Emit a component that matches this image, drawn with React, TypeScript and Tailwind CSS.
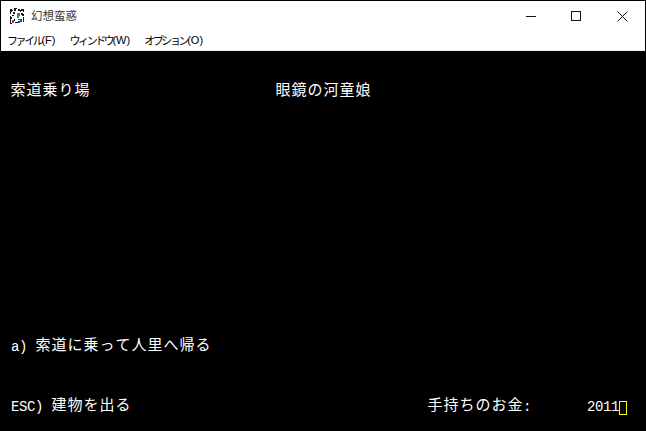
const mono = "font-['Liberation_Mono','Noto_Sans_CJK_JP',monospace]";

function Cjk({ children }: { children: string }) {
  return (
    <span className="flex">
      {Array.from(children).map((c, i) => (
        <span key={i} className="w-4 text-center text-[15px] leading-5">{c}</span>
      ))}
    </span>
  );
}

function Lat({ children }: { children: string }) {
  return <span className="whitespace-pre text-[14px] leading-5 tracking-[-0.4px]">{children}</span>;
}

function Menu({ kana, mark }: { kana: string; mark: string }) {
  return (
    <span className="flex items-center">
      <span className="font-['Noto_Sans_CJK_JP',sans-serif] tracking-[-2.4px]">{kana}</span>
      <span className="font-['Liberation_Sans',sans-serif]">{mark}</span>
    </span>
  );
}

export default function App() {
  return (
    <div className="flex h-[431px] w-[646px] flex-col overflow-hidden border border-b-0 border-black bg-black text-white">
      <div className="flex h-[30px] items-center bg-white pl-[8px] text-black">
        <svg width="16" height="16" viewBox="0 0 16 16" className="shrink-0" shapeRendering="crispEdges">
          <rect x="0" y="0" width="16" height="16" fill="#fff" />
          <path d="M1 1h2v1h1v1H3v1H2v2H1zM5 0h3v1H7v2H5zM9 1h2v1h1V1h3v3h-1V3h-2v1h-1V3H9zM1 8h1v1h1v2H2v4h1v1H1zM4 4h2v2H4zM3 7h2v1H3zM12 5h2v1h1v2h-2V7h-1zM14 9h1v5h-1zM6 14h3v1H6zM5 11h1v2H5z" fill="#1a1a1a" />
          <path d="M8 5h3v3h-1v2H8z" fill="#1f9d3a" />
          <path d="M9 11h4v3h-2v1H9v-2h2v-1H9z" fill="#2036c8" />
          <path d="M3 12h2v3H3z" fill="#c03030" />
        </svg>
        <span className="ml-[6px] font-['Noto_Sans_CJK_JP',sans-serif] text-[11.5px] text-[#333]">幻想蛮惑</span>
        <div className="ml-auto flex h-full items-center">
          <div className="flex h-full w-[45px] items-center justify-center">
            <svg width="11" height="11" viewBox="0 0 11 11"><path d="M0 5.5h10" stroke="#111" strokeWidth="1" /></svg>
          </div>
          <div className="flex h-full w-[45px] items-center justify-center">
            <svg width="11" height="11" viewBox="0 0 11 11"><rect x="0.5" y="0.5" width="9" height="9" fill="none" stroke="#111" /></svg>
          </div>
          <div className="flex h-full w-[46px] items-center justify-center">
            <svg width="11" height="11" viewBox="0 0 11 11"><path d="M0.5 0.5l10 10M10.5 0.5l-10 10" stroke="#111" /></svg>
          </div>
        </div>
      </div>
      <div className="flex h-[20px] items-center gap-[14px] border-b border-[#f0f0f0] bg-white pl-[6px] pb-[1px] text-[11px] text-black">
        <Menu kana="ファイル" mark="(F)" />
        <Menu kana="ウィンドウ" mark="(W)" />
        <Menu kana="オプション" mark="(O)" />
      </div>
      <div className={`flex flex-1 flex-col pl-[9px] pr-[18px] pt-[31px] ${mono}`}>
        <div className="flex h-5">
          <div className="w-[265px]"><Cjk>索道乗り場</Cjk></div>
          <Cjk>眼鏡の河童娘</Cjk>
        </div>
        <div className="mt-[235px] flex h-5 items-center pl-[1px]">
          <Lat>a) </Lat><Cjk>索道に乗って人里へ帰る</Cjk>
        </div>
        <div className="mt-[40px] flex h-5 items-center pl-[1px]">
          <Lat>ESC) </Lat><Cjk>建物を出る</Cjk>
          <div className="ml-auto flex items-center">
            <Cjk>手持ちのお金</Cjk>
            <Lat>:</Lat>
            <span className="w-[56px]" />
            <Lat>2011</Lat>
            <span className="mt-[2px] h-[14px] w-2 border border-[#ffff00] bg-black" />
          </div>
        </div>
      </div>
    </div>
  );
}
